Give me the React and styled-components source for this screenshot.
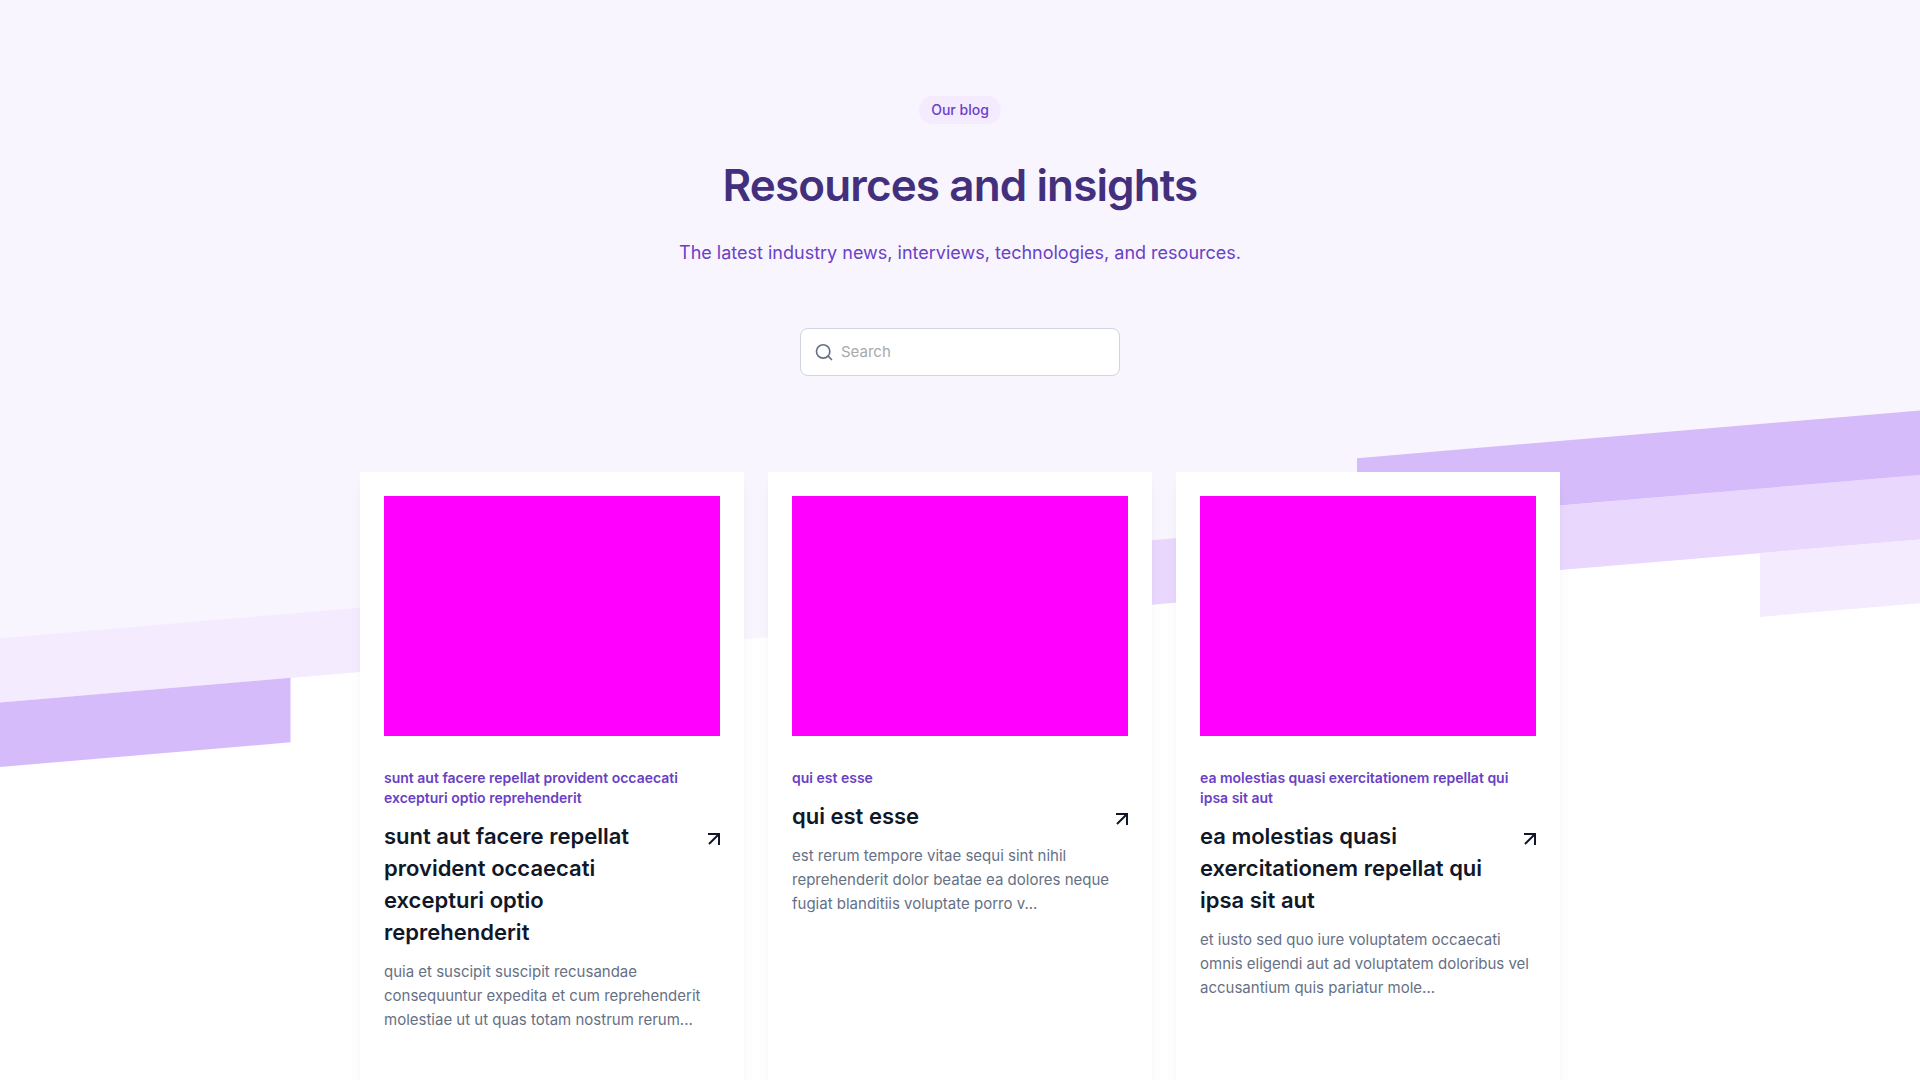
import React from "react";
import styled, { createGlobalStyle } from "styled-components";

const GlobalStyle = createGlobalStyle`
  *, *::before, *::after { box-sizing: border-box; }
  body {
    margin: 0;
    background: #fff;
    font-family: Inter, "Liberation Sans", sans-serif;
    color: #101828;
  }
`;

const Page = styled.div`
  position: relative;
  isolation: isolate;
`;

const Stripes = styled.svg`
  position: absolute;
  top: 0;
  left: 0;
  z-index: -1;
  display: block;
  width: 100%;
  height: 768px;
`;

const Hero = styled.header`
  display: flex;
  flex-direction: column;
  align-items: center;
  padding: 96px 32px;
  text-align: center;
`;

const Badge = styled.span`
  padding: 4px 12px;
  border-radius: 16px;
  background: #f4ebff;
  color: #6941c6;
  font-size: 14px;
  font-weight: 500;
  line-height: 20px;
`;

const Heading = styled.h1`
  margin: 32px 0 24px;
  color: #42307d;
  font-size: 44px;
  font-weight: 600;
  line-height: 58px;
  letter-spacing: -0.02em;
`;

const Lead = styled.p`
  margin: 0 0 60px;
  color: #6941c6;
  font-size: 18px;
  line-height: 30px;
`;

const SearchBox = styled.label`
  display: flex;
  align-items: center;
  gap: 8px;
  width: 320px;
  max-width: 100%;
  height: 48px;
  padding: 0 14px;
  border: 1px solid #d0d5dd;
  border-radius: 8px;
  background: #fff;
`;

const SearchInput = styled.input`
  flex: 1;
  min-width: 0;
  padding: 0;
  border: 0;
  outline: 0;
  background: none;
  color: #101828;
  font: inherit;
  font-size: 15px;
  line-height: 24px;

  &::placeholder {
    color: #a9a9a9;
    opacity: 1;
  }
`;

const Posts = styled.main`
  display: grid;
  grid-template-columns: repeat(auto-fit, minmax(320px, 1fr));
  gap: 24px;
  max-width: 1200px;
  margin: 0 auto;
`;

const Card = styled.article`
  padding: 24px 24px 64px;
  background: #fff;
  box-shadow: 0 12px 16px -4px rgba(16, 24, 40, 0.06), 0 4px 6px -2px rgba(16, 24, 40, 0.03);
`;

const Cover = styled.div`
  height: 240px;
  margin-bottom: 32px;
  background: #f0f;
`;

const Category = styled.p`
  margin: 0 0 12px;
  color: #6941c6;
  font-size: 14px;
  font-weight: 600;
  line-height: 20px;
`;

const TitleLink = styled.a`
  display: flex;
  align-items: flex-start;
  justify-content: space-between;
  gap: 20px;
  margin-bottom: 12px;
  color: #101828;
  text-decoration: none;
`;

const Title = styled.h2`
  margin: 0;
  font-size: 22px;
  font-weight: 600;
  line-height: 32px;
`;

const Arrow = styled.svg`
  flex: none;
  margin-top: 13px;
`;

const Excerpt = styled.p`
  margin: 0;
  color: #667085;
  font-size: 15px;
  line-height: 24px;
`;

const posts = [
  {
    title: "sunt aut facere repellat provident occaecati excepturi optio reprehenderit",
    excerpt:
      "quia et suscipit suscipit recusandae consequuntur expedita et cum reprehenderit molestiae ut ut quas totam nostrum rerum...",
  },
  {
    title: "qui est esse",
    excerpt:
      "est rerum tempore vitae sequi sint nihil reprehenderit dolor beatae ea dolores neque fugiat blanditiis voluptate porro v...",
  },
  {
    title: "ea molestias quasi exercitationem repellat qui ipsa sit aut",
    excerpt:
      "et iusto sed quo iure voluptatem occaecati omnis eligendi aut ad voluptatem doloribus vel accusantium quis pariatur mole...",
  },
];

function Background() {
  return (
    <Stripes viewBox="0 0 1920 768" preserveAspectRatio="none" aria-hidden="true">
      <path fill="#f9f5ff" d="M0 0H1920V539.5L0 702.5Z" />
      <path fill="#f4ebff" d="M0 638.2L580 589V653.3L0 702.5Z" />
      <path fill="#d6bbfb" d="M0 702.5L290.5 677.8V742.3L0 767Z" />
      <path fill="#e9d7fe" d="M960 556.6L1920 475V539.5L960 621Z" />
      <path fill="#d6bbfb" d="M1357 458.2L1920 410.4V475L1357 522.8Z" />
      <path fill="#f4ebff" d="M1760 553.1L1920 539.5V603.3L1760 616.9Z" />
    </Stripes>
  );
}

function PostCard({ post }) {
  return (
    <Card>
      <Cover />
      <Category>{post.title}</Category>
      <TitleLink href="#">
        <Title>{post.title}</Title>
        <Arrow width="12" height="12" viewBox="0 0 12 12" fill="none" stroke="currentColor" strokeWidth="2" aria-hidden="true">
          <path d="M1 11L11 1M0 1H11V12" />
        </Arrow>
      </TitleLink>
      <Excerpt>{post.excerpt}</Excerpt>
    </Card>
  );
}

export default function App() {
  return (
    <Page>
      <GlobalStyle />
      <Background />
      <Hero>
        <Badge>Our blog</Badge>
        <Heading>Resources and insights</Heading>
        <Lead>The latest industry news, interviews, technologies, and resources.</Lead>
        <SearchBox>
          <svg width="18" height="18" viewBox="0 0 18 18" fill="none" stroke="#667085" strokeWidth="1.67" strokeLinecap="round" strokeLinejoin="round" aria-hidden="true">
            <path d="M16.5 16.5L12.875 12.875M14.83 8.17A6.67 6.67 0 1 1 1.5 8.17A6.67 6.67 0 0 1 14.83 8.17Z" />
          </svg>
          <SearchInput type="search" placeholder="Search" aria-label="Search" />
        </SearchBox>
      </Hero>
      <Posts>
        {posts.map((post) => (
          <PostCard key={post.title} post={post} />
        ))}
      </Posts>
    </Page>
  );
}
